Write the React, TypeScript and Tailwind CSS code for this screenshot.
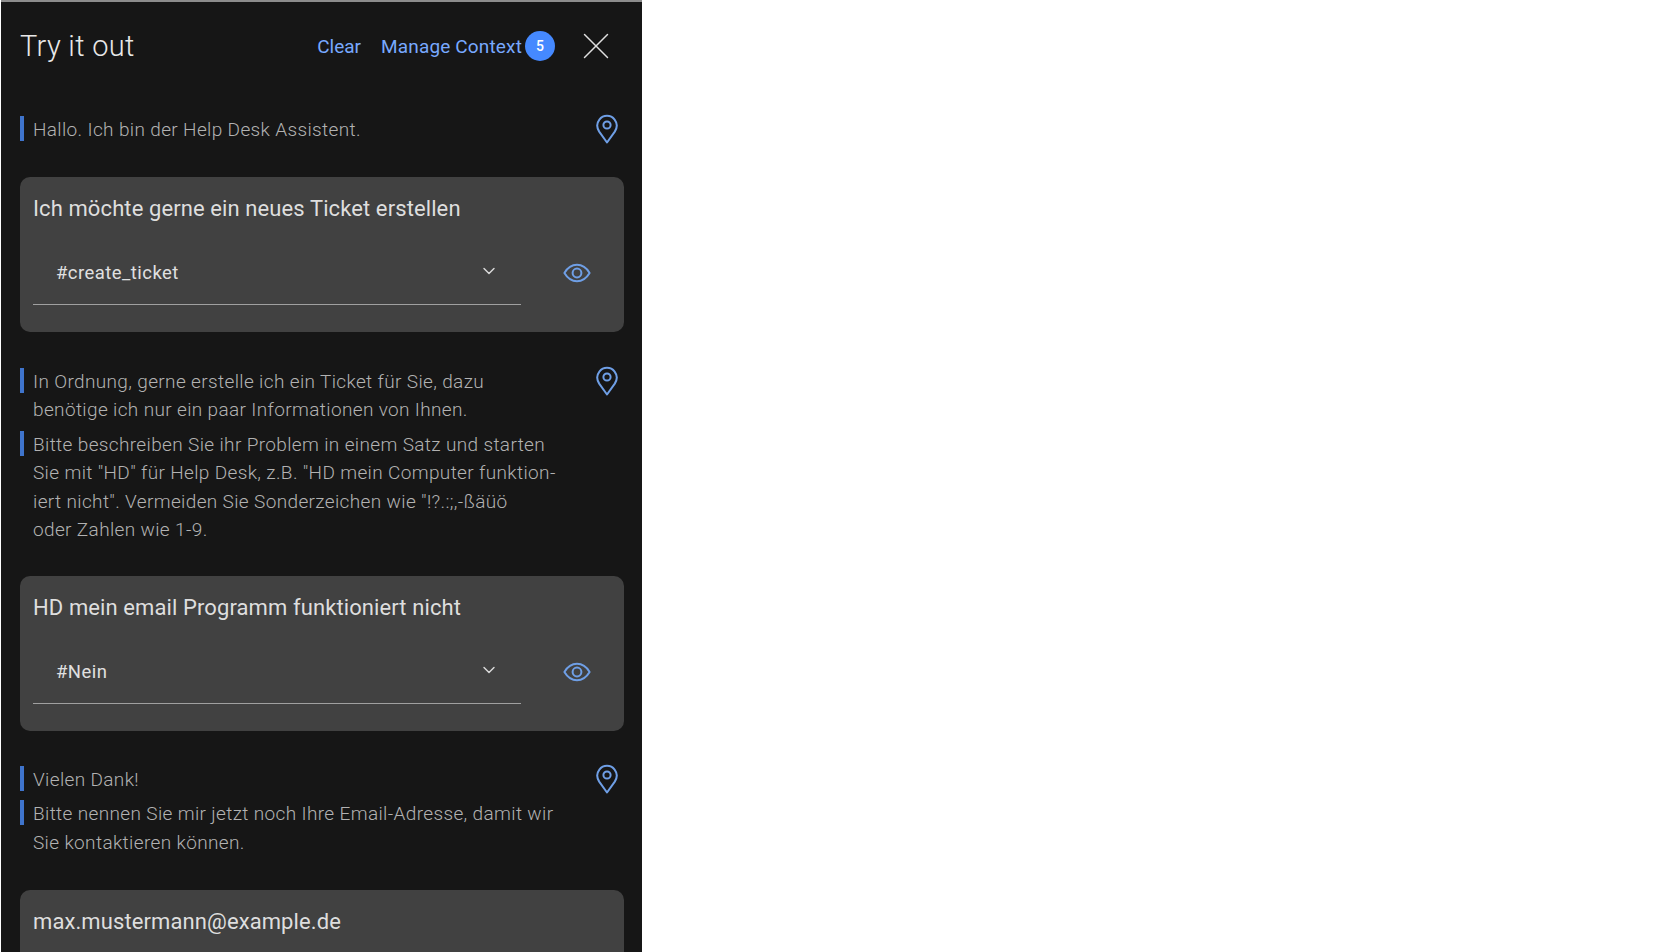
import React from 'react';
import { ChevronDown, X } from 'lucide-react';

const FONT = 'font-["Roboto",sans-serif]';

const PinIcon = () => (
  <svg width="24" height="30" viewBox="0 0 24 30" fill="none" stroke="#6f9fe6" strokeWidth="2" className="shrink-0">
    <path d="M12 28.5 L4.2 17.6 C1.6 13.6 1.8 9 4.4 5.6 C6.2 3.2 9 1.8 12 1.8 C15 1.8 17.8 3.2 19.6 5.6 C22.2 9 22.4 13.6 19.8 17.6 Z" strokeLinejoin="round" />
    <circle cx="12" cy="11" r="3.6" />
  </svg>
);

const EyeIcon = () => (
  <svg width="28" height="20" viewBox="0 0 28 20" fill="none" stroke="#6f9fe6" strokeWidth="2" className="shrink-0 -mt-[4px]">
    <path d="M1.4 10 C4.6 4.6 9 1.8 14 1.8 C19 1.8 23.4 4.6 26.6 10 C23.4 15.4 19 18.2 14 18.2 C9 18.2 4.6 15.4 1.4 10 Z" strokeLinejoin="round" />
    <circle cx="14" cy="10" r="4.4" />
  </svg>
);

// bar on the left of each assistant line
const Message: React.FC<{ lines: string[] }> = ({ lines }) => (
  <div className="relative pl-[13px] text-[19px] leading-[28.5px] tracking-[0.36px] text-[#b2b2b2] font-light">
    <span className="absolute left-0 top-0 w-1 h-[25px] bg-[#3f74cc]" />
    {lines.map((l) => (
      <div key={l} className="whitespace-nowrap">{l}</div>
    ))}
  </div>
);

const Bot: React.FC<{ groups: string[][] }> = ({ groups }) => (
  <div className="flex justify-between pr-[5px]">
    <div className="flex flex-col gap-[6px]">
      {groups.map((g) => (
        <Message key={g[0]} lines={g} />
      ))}
    </div>
    <div className="-mt-[2px]">
      <PinIcon />
    </div>
  </div>
);

const UserCard: React.FC<{ text: string; intent?: string }> = ({ text, intent }) => (
  <div className="rounded-[10px] bg-[#414141] pl-[13px] pr-[33px] pt-[17px] h-[155px] shrink-0">
    <div className="text-[22px] leading-[30px] tracking-[0.1px] text-[#dedede]">{text}</div>
    {intent && (
      <div className="flex items-center gap-[42px] mt-[21px]">
        <div className="w-[489px] h-[60px] border-b border-[#a0a0a0] flex items-center justify-between pl-[23px] pr-[22px]">
          <span className="text-[18.5px] tracking-[0.45px] text-[#e0e0e0]">{intent}</span>
          <ChevronDown size={20} strokeWidth={1.75} className="text-[#d8d8d8] -mt-[6px]" />
        </div>
        <EyeIcon />
      </div>
    )}
  </div>
);

export default function App() {
  return (
    <div className={`h-screen overflow-hidden bg-white ${FONT}`}>
      <div className="ml-[1px] w-[641px] h-full bg-[#161616] border-t-2 border-[#8c8c8c] flex flex-col pl-[19px] pr-[18px] overflow-hidden">
        <div className="flex items-center justify-between h-[90px] shrink-0">
          <h1 className="text-[29px] font-light tracking-[0.3px] text-[#e8e8e8]">Try it out</h1>
          <div className="flex items-center">
            <span className="text-[19px] text-[#78a9ff] mr-[20px]">Clear</span>
            <span className="text-[19px] tracking-[0.15px] text-[#78a9ff]">Manage Context</span>
            <span className="ml-[3px] -mt-[2px] w-[30px] h-[30px] rounded-full bg-[#4589ff] text-white text-[14px] font-medium flex items-center justify-center">5</span>
            <X size={46} strokeWidth={0.75} className="ml-[18px] mr-[5px] -mt-[2px] text-[#e0e0e0]" />
          </div>
        </div>
        <div className="flex flex-col mt-[24px]">
          <Bot groups={[['Hallo. Ich bin der Help Desk Assistent.']]} />
          <div className="mt-[32px]">
            <UserCard text="Ich möchte gerne ein neues Ticket erstellen" intent="#create_ticket" />
          </div>
          <div className="mt-[36px]">
            <Bot
              groups={[
                ['In Ordnung, gerne erstelle ich ein Ticket für Sie, dazu', 'benötige ich nur ein paar Informationen von Ihnen.'],
                [
                  'Bitte beschreiben Sie ihr Problem in einem Satz und starten',
                  'Sie mit "HD" für Help Desk, z.B. "HD mein Computer funktion-',
                  'iert nicht". Vermeiden Sie Sonderzeichen wie "!?.:;,-ßäüö',
                  'oder Zahlen wie 1-9.',
                ],
              ]}
            />
          </div>
          <div className="mt-[31px]">
            <UserCard text="HD mein email Programm funktioniert nicht" intent="#Nein" />
          </div>
          <div className="mt-[35px]">
            <Bot
              groups={[
                ['Vielen Dank!'],
                ['Bitte nennen Sie mir jetzt noch Ihre Email-Adresse, damit wir', 'Sie kontaktieren können.'],
              ]}
            />
          </div>
          <div className="mt-[33px]">
            <UserCard text="max.mustermann@example.de" />
          </div>
        </div>
      </div>
    </div>
  );
}
